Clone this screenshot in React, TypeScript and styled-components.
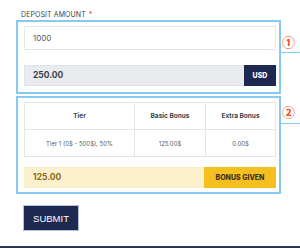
import React from "react";
import styled, { createGlobalStyle } from "styled-components";

const Global = createGlobalStyle`
  html, body { margin: 0; padding: 0; background: #fff; }
  body { font-family: Inter, "Open Sans", "Liberation Sans", sans-serif; }
`;

const Page = styled.div`
  position: relative;
  width: 300px;
  height: 248px;
  overflow: hidden;
  box-sizing: border-box;
  padding: 10px 0 0 16px;
`;

const Label = styled.div`
  font-size: 7px;
  letter-spacing: 0.1px;
  color: #3a3f4a;
  text-transform: uppercase;
  height: 10px;
  line-height: 10px;
  padding-left: 5px;
  span { color: #e0383b; margin-left: 3px; }
`;

const Callout = styled.div<{ $pad: string }>`
  position: relative;
  width: 265px;
  box-sizing: border-box;
  border: 2px solid #86c9f3;
  padding: ${(p) => p.$pad};
  display: flex;
  flex-direction: column;
`;

const Marker = styled.div<{ $top: number; $line: number }>`
  position: absolute;
  left: 263px;
  top: ${(p) => p.$top}px;
  width: 19px;
  height: 16px;
  box-sizing: border-box;
  padding-left: 1px;
  color: #f0522a;
  font-size: 13px;
  font-weight: 700;
  line-height: 16px;
  font-family: "Noto Sans CJK JP", "DejaVu Sans", sans-serif;
  &::after {
    content: "";
    position: absolute;
    left: 0;
    top: ${(p) => p.$line}px;
    width: 19px;
    height: 1px;
    background: #86c9f3;
  }
`;

const Input = styled.div`
  height: 24px;
  box-sizing: border-box;
  border: 1px solid #e3e5e8;
  font-size: 8px;
  color: #555b66;
  line-height: 22px;
  padding-left: 8px;
`;

const GroupRow = styled.div<{ $bg: string; $line: string; $mt: number }>`
  margin-top: ${(p) => p.$mt}px;
  display: flex;
  height: 21px;
  background: ${(p) => p.$bg};
  border: 1px solid ${(p) => p.$line};
  box-sizing: border-box;
`;

const Amount = styled.div<{ $color: string }>`
  flex: 1;
  font-size: 8.5px;
  font-weight: 700;
  color: ${(p) => p.$color};
  line-height: 19px;
  padding-left: 8px;
`;

const Addon = styled.div<{ $bg: string; $fg: string; $w: number }>`
  width: ${(p) => p.$w}px;
  background: ${(p) => p.$bg};
  color: ${(p) => p.$fg};
  font-size: 7px;
  font-weight: 800;
  text-align: center;
  line-height: 21px;
  margin: -1px -1px -1px 0;
  height: 21px;
`;

const Table = styled.table`
  border-collapse: collapse;
  width: 100%;
  table-layout: fixed;
  th, td {
    border: 1px solid #e3e5e8;
    text-align: center;
    color: #3a3f4a;
    padding: 0;
  }
  th { height: 26px; font-size: 6.5px; font-weight: 700; }
  td { height: 26px; font-size: 6px; color: #555b66; }
`;

const Submit = styled.button`
  margin: 11px 0 0 7px;
  width: 56px;
  height: 26px;
  background: #1e2952;
  border: 1px solid #b8bfd0;
  color: #fff;
  font-family: "Liberation Sans", Arial, sans-serif;
  font-size: 9.5px;
  padding: 0;
  display: block;
`;

const BottomBar = styled.div`
  position: absolute;
  left: 0;
  right: 0;
  bottom: 0;
  height: 2px;
  background: #2c3552;
`;

export default function App() {
  return (
    <>
      <Global />
      <Page>
        <Label>
          Deposit Amount<span>*</span>
        </Label>
        <Callout $pad="4px 3px 6px 6px">
          <Marker $top={12} $line={18}>①</Marker>
          <Input>1000</Input>
          <GroupRow $bg="#e9ebee" $line="#dfe2e6" $mt={15}>
            <Amount $color="#3a3f4a">250.00</Amount>
            <Addon $bg="#1e2952" $fg="#fff" $w={32}>USD</Addon>
          </GroupRow>
        </Callout>
        <Callout $pad="4px 3px 4px 6px" style={{ marginTop: 2 }}>
          <Marker $top={6} $line={19}>②</Marker>
          <Table>
            <colgroup>
              <col style={{ width: 110 }} />
              <col style={{ width: 71 }} />
              <col style={{ width: 70 }} />
            </colgroup>
            <thead>
              <tr>
                <th>Tier</th>
                <th>Basic Bonus</th>
                <th>Extra Bonus</th>
              </tr>
            </thead>
            <tbody>
              <tr>
                <td>Tier 1 (0$ - 500$), 50%</td>
                <td>125.00$</td>
                <td>0.00$</td>
              </tr>
            </tbody>
          </Table>
          <GroupRow $bg="#fdf0cd" $line="#fbeecb" $mt={10}>
            <Amount $color="#8a6a12">125.00</Amount>
            <Addon $bg="#f5c01f" $fg="#3a3320" $w={72}>BONUS GIVEN</Addon>
          </GroupRow>
        </Callout>
        <Submit>SUBMIT</Submit>
        <BottomBar />
      </Page>
    </>
  );
}
